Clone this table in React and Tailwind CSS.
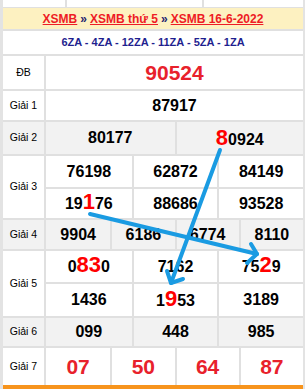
const font = { fontFamily: '"Liberation Sans", Arial, sans-serif' }

function Num({ children }) {
  return <span className="font-bold text-[16px] text-black leading-none">{children}</span>
}

function Hi({ children }) {
  return <span className="font-bold text-[22px] text-[#f00] leading-none">{children}</span>
}

function Cells({ items, cols, h, last }) {
  const grid = cols === 2 ? 'grid-cols-2' : cols === 3 ? 'grid-cols-3' : 'grid-cols-4'
  return (
    <div className={`grid ${grid} ${h} ${last ? '' : 'border-b-2 border-[#e0e0e0]'}`}>
      {items.map((it, i) => (
        <div
          key={i}
          className={`flex items-center justify-center ${i > 0 ? 'border-l-2 border-[#e0e0e0]' : ''}`}
        >
          {it}
        </div>
      ))}
    </div>
  )
}

function Row({ label, gray, h, children }) {
  return (
    <div className={`flex border-b-2 border-[#e0e0e0] ${h} ${gray ? 'bg-[#f2f2f2]' : 'bg-white'}`}>
      <div className="w-[43px] flex items-center justify-center text-[10.5px] text-black border-r-2 border-[#e0e0e0]">
        {label}
      </div>
      <div className="flex-1 flex flex-col">{children}</div>
    </div>
  )
}

export default function App() {
  return (
    <div className="relative w-[308px] h-[389px] bg-white overflow-hidden" style={font}>
      <div className="w-[305px] border-l-[3px] border-r-2 border-[#e3e3e3]">
        {/* previous table remnant */}
        <div className="flex h-[8px] border-b border-[#e0e0e0]">
          <div className="w-[64px] border-r-2 border-[#e0e0e0]" />
          <div className="w-[137px] border-r-2 border-[#e0e0e0]" />
          <div className="flex-1" />
        </div>

        {/* header */}
        <div className="h-[23px] bg-[#fdf1c1] flex items-center justify-center gap-[3px] text-[12px] font-bold border-b-2 border-[#e0e0e0]">
          <a className="text-[#ee1c25] underline">XSMB</a>
          <span className="text-[#1f1f6f]">»</span>
          <a className="text-[#ee1c25] underline">XSMB thứ 5</a>
          <span className="text-[#1f1f6f]">»</span>
          <a className="text-[#ee1c25] underline">XSMB 16-6-2022</a>
        </div>

        <div className="h-[25px] flex items-center justify-center text-[11px] font-bold text-[#1f1f8f] border-b-2 border-[#e0e0e0]">
          6ZA - 4ZA - 12ZA - 11ZA - 5ZA - 1ZA
        </div>

        <Row label="ĐB" h="h-[35px]">
          <div className="flex-1 flex items-center justify-center">
            <span className="font-bold text-[21px] text-[#e8212b]">90524</span>
          </div>
        </Row>

        <Row label="Giải 1" h="h-[31px]">
          <div className="flex-1 flex items-center justify-center">
            <Num>87917</Num>
          </div>
        </Row>

        <Row label="Giải 2" gray h="h-[34px]">
          <Cells
            cols={2}
            h="h-full"
            last
            items={[
              <Num>80177</Num>,
              <span className="pt-[2px]"><Hi>8</Hi><Num>0924</Num></span>,
            ]}
          />
        </Row>

        <Row label="Giải 3" h="h-[64px]">
          <Cells cols={3} h="h-[33px]" items={[<Num>76198</Num>, <Num>62872</Num>, <Num>84149</Num>]} />
          <Cells
            cols={3}
            h="flex-1"
            last
            items={[
              <span><Num>19</Num><Hi>1</Hi><Num>76</Num></span>,
              <Num>88686</Num>,
              <Num>93528</Num>,
            ]}
          />
        </Row>

        <Row label="Giải 4" gray h="h-[31px]">
          <Cells
            cols={4}
            h="h-full"
            last
            items={[<Num>9904</Num>, <Num>6186</Num>, <Num>6774</Num>, <Num>8110</Num>]}
          />
        </Row>

        <Row label="Giải 5" h="h-[67px]">
          <Cells
            cols={3}
            h="h-[33px]"
            items={[
              <span><Num>0</Num><Hi>83</Hi><Num>0</Num></span>,
              <Num>7162</Num>,
              <span><Num>75</Num><Hi>2</Hi><Num>9</Num></span>,
            ]}
          />
          <Cells
            cols={3}
            h="flex-1"
            last
            items={[
              <Num>1436</Num>,
              <span><Num>1</Num><Hi>9</Hi><Num>53</Num></span>,
              <Num>3189</Num>,
            ]}
          />
        </Row>

        <Row label="Giải 6" gray h="h-[30px]">
          <Cells cols={3} h="h-full" last items={[<Num>099</Num>, <Num>448</Num>, <Num>985</Num>]} />
        </Row>

        <div className="flex h-[37px] bg-white">
          <div className="w-[43px] flex items-center justify-center text-[10.5px] text-black border-r-2 border-[#e0e0e0]">
            Giải 7
          </div>
          <div className="flex-1 grid grid-cols-4">
            {['07', '50', '64', '87'].map((n, i) => (
              <div
                key={n}
                className={`flex items-center justify-center font-bold text-[21px] text-[#e8212b] ${i > 0 ? 'border-l-2 border-[#e0e0e0]' : ''}`}
              >
                {n}
              </div>
            ))}
          </div>
        </div>
        <div className="h-[4px] bg-[#f7941d]" />
      </div>

      {/* arrows */}
      <svg className="absolute inset-0 pointer-events-none" width="308" height="389" viewBox="0 0 308 389">
        <g stroke="#1a9be2" strokeWidth="4" strokeLinecap="round" strokeLinejoin="round" fill="none">
          <line x1="90" y1="214" x2="257" y2="254" />
          <polyline points="251,244 257,254 247,263" />
          <line x1="220" y1="150" x2="171" y2="283" />
          <polyline points="167,271 171,283 183,279" />
        </g>
      </svg>
    </div>
  )
}
